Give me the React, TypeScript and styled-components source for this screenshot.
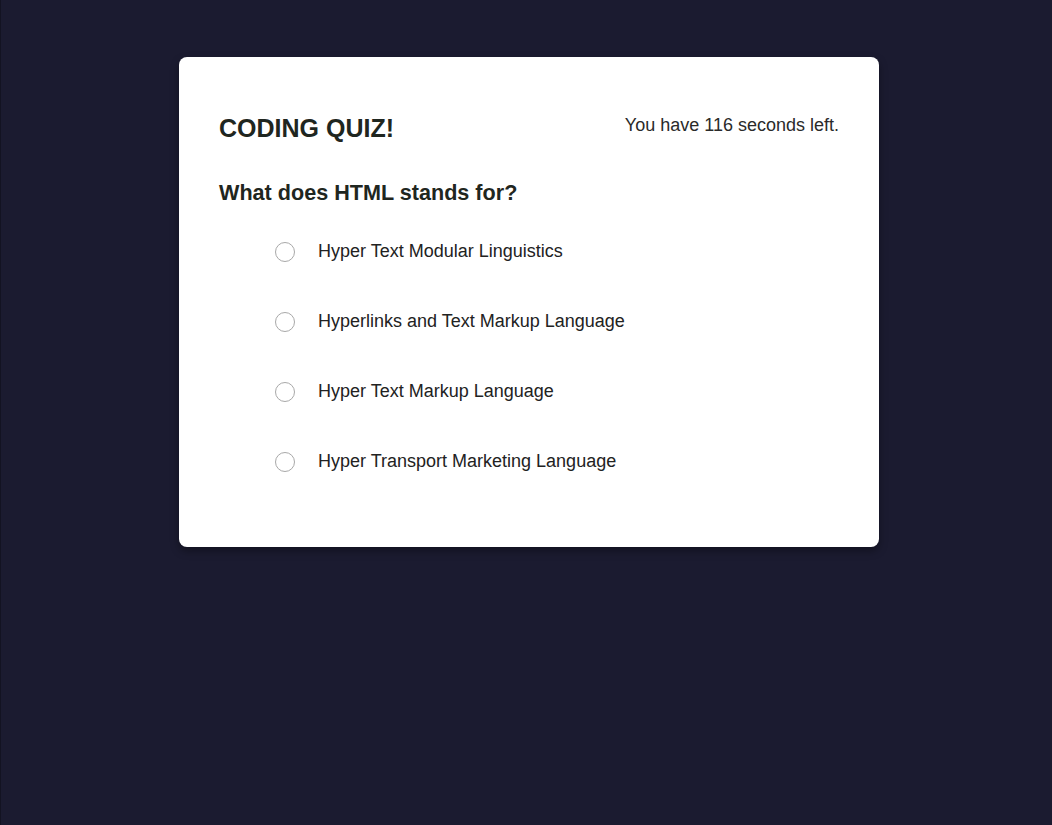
import styled, { createGlobalStyle } from 'styled-components';

const GlobalStyle = createGlobalStyle`
  html, body {
    margin: 0;
    padding: 0;
    background: #1b1b30;
    font-family: "Liberation Sans", Arial, sans-serif;
  }
`;

const options = [
   'Hyper Text Modular Linguistics',
   'Hyperlinks and Text Markup Language',
   'Hyper Text Markup Language',
   'Hyper Transport Marketing Language',
];

const App = () => {
   return (
      <>
         <GlobalStyle />
         <Page>
            <Card>
               <Header>
                  <Title>CODING QUIZ!</Title>
                  <Timer>You have 116 seconds left.</Timer>
               </Header>
               <Question>What does HTML stands for?</Question>
               <Options>
                  {options.map((opt) => (
                     <Option key={opt}>
                        <Radio type="radio" name="answer" value={opt} />
                        <span>{opt}</span>
                     </Option>
                  ))}
               </Options>
            </Card>
         </Page>
      </>
   );
}

const Page = styled.div`
  min-height: 825px;
  box-sizing: border-box;
  padding-top: 57px;
  border-left: 1px solid #131322;
  display: flex;
  justify-content: center;
  align-items: flex-start;
`;

const Card = styled.div`
  width: 700px;
  height: 490px;
  box-sizing: border-box;
  margin-left: 5px;
  padding: 57px 40px 0;
  background: #fff;
  border-radius: 8px;
  box-shadow: 0 4px 8px rgba(0, 0, 0, 0.35);
  color: #222;
`;

const Header = styled.div`
  display: flex;
  justify-content: space-between;
  align-items: flex-start;
`;

const Title = styled.h1`
  margin: 0;
  font-size: 25px;
  font-weight: bold;
  color: #1f2620;
`;

const Timer = styled.p`
  margin: 1px 0 0;
  font-size: 18px;
  color: #2a2a2a;
`;

const Question = styled.h2`
  margin: 37px 0 0;
  font-size: 21.6px;
  font-weight: bold;
  color: #1f2620;
`;

const Options = styled.div`
  display: flex;
  flex-direction: column;
  gap: 48px;
  margin-top: 34px;
  padding-left: 56px;
`;

const Option = styled.label`
  display: flex;
  align-items: center;
  gap: 23px;
  height: 22px;
  font-size: 18px;
  color: #222;
  cursor: pointer;
`;

const Radio = styled.input`
  appearance: none;
  margin: 2px 0 0;
  width: 20px;
  height: 20px;
  border: 1px solid #a8a8a8;
  border-radius: 50%;
  background: #fff;
  box-sizing: border-box;
  flex-shrink: 0;

  &:checked {
    border: 6px solid #1a73e8;
  }
`;

export default App;
